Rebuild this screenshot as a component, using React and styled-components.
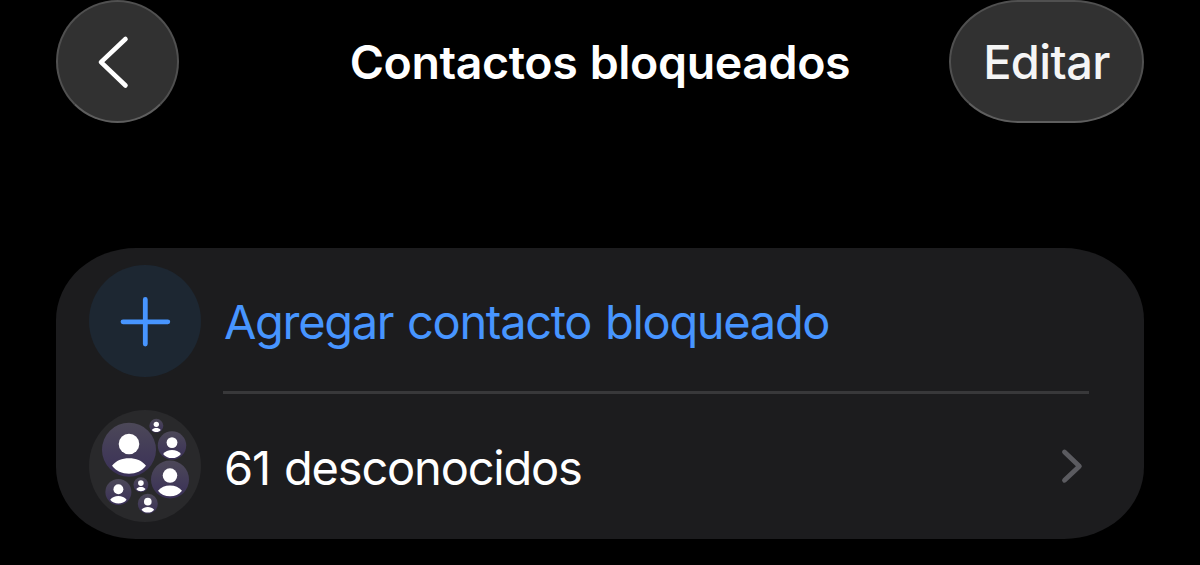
import React from "react";
import styled, { createGlobalStyle } from "styled-components";

const GlobalStyle = createGlobalStyle`
  * {
    box-sizing: border-box;
  }

  body {
    margin: 0;
    background-color: #000000;
    color: #ffffff;
    font-family: Inter, "Liberation Sans", sans-serif;
    overflow: hidden;
  }
`;

const Screen = styled.div`
  height: 565px;
  padding: 0 56px;
`;

const NavBar = styled.header`
  display: grid;
  grid-template-columns: 195px 1fr 195px;
  align-items: center;
  height: 123px;
`;

const GlassButton = styled.button`
  display: flex;
  align-items: center;
  justify-content: center;
  width: ${(props) => props.$width};
  height: 123px;
  padding: 0;
  border: 2px solid;
  border-color: #505050 #505050 #5e5e5e #505050;
  border-radius: ${(props) => props.$radius};
  background-color: #313131;
  color: #f5f5f5;
  font-family: inherit;
`;

const Title = styled.h1`
  margin: 0;
  padding-top: 1px;
  font-size: 46.5px;
  font-weight: 600;
  line-height: 60px;
  letter-spacing: -0.4px;
  word-spacing: 1px;
  text-align: center;
  white-space: nowrap;
`;

const ButtonLabel = styled.span`
  padding-top: 1px;
  font-size: 47px;
  font-weight: 500;
  line-height: 60px;
  letter-spacing: -0.6px;
`;

const List = styled.main`
  margin-top: 125px;
  height: 291px;
  border-radius: 80px / 72px;
  background-color: #1c1c1e;
`;

const Row = styled.div`
  display: flex;
  height: 145.5px;
  padding-left: 33px;
`;

const Avatar = styled.div`
  display: flex;
  flex-shrink: 0;
  align-self: center;
  width: 112px;
  height: 112px;
  border-radius: 50%;
  background-color: ${(props) => props.$color};
`;

const RowBody = styled.div`
  display: flex;
  flex: 1;
  align-items: center;
  justify-content: space-between;
  margin-left: 22px;
  margin-right: 55px;
  padding-right: 6px;
  border-bottom: ${(props) => (props.$divider ? "3px solid #38383a" : "none")};
`;

const RowLabel = styled.span`
  padding-top: ${(props) => props.$offset};
  padding-left: 1px;
  color: ${(props) => props.$color};
  font-size: 47px;
  font-weight: 400;
  line-height: 60px;
  letter-spacing: ${(props) => props.$spacing};
  word-spacing: 2px;
  white-space: nowrap;
`;

// Small people bubbles inside the group avatar
const people = [
  { x: 49, y: 50, r: 27 },
  { x: 76.3, y: 26.1, r: 7 },
  { x: 92, y: 45.8, r: 14.2 },
  { x: 90, y: 79.8, r: 19 },
  { x: 60.9, y: 84.9, r: 7.4 },
  { x: 38.4, y: 92.2, r: 13 },
  { x: 67.8, y: 104, r: 10 },
];

const BackIcon = () => (
  <svg width="119" height="119" viewBox="58 2 119 119" fill="none">
    <path
      d="M125.5 39 L101 62.2 L125.5 85.5"
      stroke="#ffffff"
      strokeWidth="4.6"
      strokeLinecap="round"
      strokeLinejoin="round"
    />
  </svg>
);

const PlusIcon = () => (
  <svg width="112" height="112" viewBox="89 265 112 112" fill="none">
    <path
      d="M145.3 299.5 V344 M123 321.8 H167.8"
      stroke="#4795ff"
      strokeWidth="4.8"
      strokeLinecap="round"
    />
  </svg>
);

const GroupIcon = () => (
  <svg width="112" height="112" viewBox="9 10.25 112 112">
    <defs>
      <linearGradient id="bubble" x1="0" y1="0" x2="0" y2="1">
        <stop offset="0" stopColor="#4c4858" />
        <stop offset="1" stopColor="#3a3058" />
      </linearGradient>
    </defs>
    {people.map(({ x, y, r }) => (
      <g key={`${x}-${y}`} transform={`translate(${x} ${y}) scale(${r / 27})`}>
        <circle r="27" fill="url(#bubble)" />
        <circle cy="-5.7" r="10.3" fill="#ffffff" />
        <path
          d="M-17 16 C-13 11 -7 8.6 0 8.6 C7 8.6 13 11 17 16 C13 21.3 7 23.9 0 23.9 C-7 23.9 -13 21.3 -17 16 Z"
          fill="#ffffff"
        />
      </g>
    ))}
  </svg>
);

const ChevronIcon = () => (
  <svg width="22" height="36" viewBox="1061 448.5 22 36" fill="none">
    <path
      d="M1064.5 452.5 L1079.4 466.7 L1064.5 480.8"
      stroke="#5b5b60"
      strokeWidth="4.8"
      strokeLinecap="round"
      strokeLinejoin="round"
    />
  </svg>
);

const App = () => {
  return (
    <>
      <GlobalStyle />
      <Screen>
        <NavBar>
          <GlassButton $width="123px" $radius="50%" aria-label="Atrás">
            <BackIcon />
          </GlassButton>
          <Title>Contactos bloqueados</Title>
          <GlassButton $width="195px" $radius="70px / 61.5px">
            <ButtonLabel>Editar</ButtonLabel>
          </GlassButton>
        </NavBar>
        <List>
          <Row>
            <Avatar $color="#1d2732">
              <PlusIcon />
            </Avatar>
            <RowBody $divider>
              <RowLabel $color="#4795ff" $spacing="-1.33px" $offset="6px">
                Agregar contacto bloqueado
              </RowLabel>
            </RowBody>
          </Row>
          <Row>
            <Avatar $color="#29292b">
              <GroupIcon />
            </Avatar>
            <RowBody>
              <RowLabel $color="#ffffff" $spacing="-1.18px" $offset="3px">
                61 desconocidos
              </RowLabel>
              <ChevronIcon />
            </RowBody>
          </Row>
        </List>
      </Screen>
    </>
  );
};

export default App;
